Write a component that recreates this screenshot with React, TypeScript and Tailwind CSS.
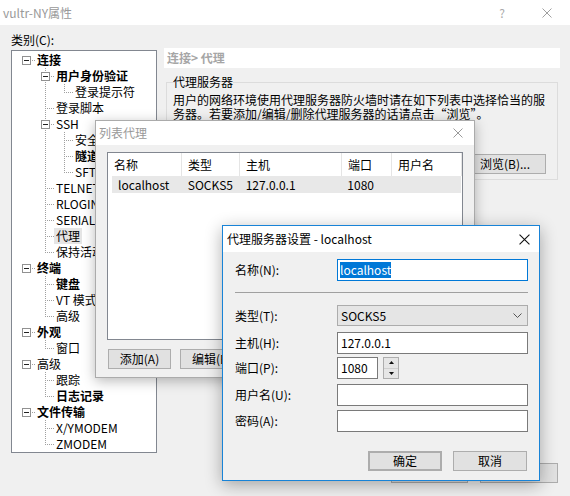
import React from 'react';

type Node = { t: string; l: number; b?: boolean; exp?: boolean; last?: boolean; sel?: boolean };

const tree: Node[] = [
  { t: '连接', l: 0, b: true, exp: true },
  { t: '用户身份验证', l: 1, b: true, exp: true },
  { t: '登录提示符', l: 2, last: true },
  { t: '登录脚本', l: 1 },
  { t: 'SSH', l: 1, exp: true },
  { t: '安全', l: 2 },
  { t: '隧道', l: 2, b: true },
  { t: 'SFTP', l: 2, last: true },
  { t: 'TELNET', l: 1 },
  { t: 'RLOGIN', l: 1 },
  { t: 'SERIAL', l: 1 },
  { t: '代理', l: 1, sel: true },
  { t: '保持活动', l: 1, last: true },
  { t: '终端', l: 0, b: true, exp: true },
  { t: '键盘', l: 1, b: true },
  { t: 'VT 模式', l: 1 },
  { t: '高级', l: 1, last: true },
  { t: '外观', l: 0, b: true, exp: true },
  { t: '窗口', l: 1, last: true },
  { t: '高级', l: 0, exp: true },
  { t: '跟踪', l: 1 },
  { t: '日志记录', l: 1, b: true, last: true },
  { t: '文件传输', l: 0, b: true, exp: true },
  { t: 'X/YMODEM', l: 1 },
  { t: 'ZMODEM', l: 1, last: true },
];

const DOT = '#a0a0a0';

function Cell({ kind, last, exp }: { kind: 'vert' | 'elbow' | 'root' | 'empty'; last?: boolean; exp?: boolean }) {
  return (
    <svg width="19" height="16" className="shrink-0" shapeRendering="crispEdges">
      {kind === 'vert' && <line x1="9.5" y1="0" x2="9.5" y2="16" stroke={DOT} strokeDasharray="1 1" />}
      {kind === 'elbow' && (
        <>
          <line x1="9.5" y1="0" x2="9.5" y2={last ? 9 : 16} stroke={DOT} strokeDasharray="1 1" />
          <line x1="11" y1="8.5" x2="19" y2="8.5" stroke={DOT} strokeDasharray="1 1" />
        </>
      )}
      {kind === 'root' && <line x1="15" y1="8.5" x2="19" y2="8.5" stroke={DOT} strokeDasharray="1 1" />}
      {exp && (
        <>
          <rect x="5.5" y="4.5" width="8" height="8" fill="white" stroke="#919191" />
          <line x1="7" y1="8.5" x2="12" y2="8.5" stroke="#222" />
        </>
      )}
    </svg>
  );
}

function TreeRow({ n }: { n: Node }) {
  const cells: React.ReactNode[] = [];
  if (n.l === 0) {
    cells.push(<Cell key="r" kind="root" exp={n.exp} />);
  } else {
    cells.push(<Cell key="e0" kind="empty" />);
    for (let a = 1; a < n.l; a++) cells.push(<Cell key={'v' + a} kind="vert" />);
    cells.push(<Cell key="el" kind="elbow" last={n.last} exp={n.exp} />);
  }
  return (
    <div className="flex h-4 items-center whitespace-nowrap pl-[5px]">
      {cells}
      <span
        className={
          'leading-4 ' +
          (n.b ? 'font-bold ' : '') +
          (n.sel ? '-ml-[1px] bg-[#e5e5e5] px-[2px]' : 'pl-[1px]')
        }
      >
        {n.t}
      </span>
    </div>
  );
}

function XIcon({ color, size = 10 }: { color: string; size?: number }) {
  return (
    <svg width={size} height={size} viewBox="0 0 10 10" className="shrink-0">
      <path d="M0.5 0.5 L9.5 9.5 M9.5 0.5 L0.5 9.5" stroke={color} strokeWidth="1" />
    </svg>
  );
}

function Btn({ label, w, cls = '' }: { label: string; w: string; cls?: string }) {
  return (
    <div
      className={
        'flex h-[20px] shrink-0 items-center justify-center border border-[#adadad] bg-[#e1e1e1] leading-4 ' +
        w +
        ' ' +
        cls
      }
    >
      {label}
    </div>
  );
}

function ListDialog() {
  const cols = [
    { h: '名称', w: 'w-[74px]', v: 'localhost' },
    { h: '类型', w: 'w-[58px]', v: 'SOCKS5' },
    { h: '主机', w: 'w-[102px]', v: '127.0.0.1' },
    { h: '端口', w: 'w-[50px]', v: '1080' },
    { h: '用户名', w: 'w-[70px]', v: '' },
  ];
  return (
    <div className="absolute left-[95px] top-[120px] flex h-[258px] w-[380px] flex-col border border-[#ababab] bg-[#f0f0f0] shadow-[0_3px_12px_rgba(0,0,0,0.28)]">
      <div className="flex h-[24px] items-center bg-white pl-[3px] pr-[11px]">
        <span className="text-[12px] text-[#999]">列表代理</span>
        <div className="ml-auto">
          <XIcon color="#9a9a9a" />
        </div>
      </div>
      <div className="flex flex-col pl-[11px] pt-[7px]">
        <div className="h-[188px] w-[356px] border border-[#828790] bg-white">
          <div className="flex h-[23px]">
            {cols.map((c) => (
              <div key={c.h} className={'flex items-center border-r border-[#e5e5e5] pl-[6px] ' + c.w}>
                {c.h}
              </div>
            ))}
          </div>
          <div className="ml-[4px] mr-[1px] flex h-[17px] bg-[#e8e8e8]">
            {cols.map((c, i) => (
              <div key={c.h} className={'flex items-center pl-[6px] ' + (i === 0 ? 'w-[70px] pl-[2px]' : c.w)}>
                {c.v}
              </div>
            ))}
          </div>
        </div>
        <div className="ml-px mt-[9px] flex gap-[9px]">
          <Btn label="添加(A)" w="w-[63px]" />
          <Btn label="编辑(E)" w="w-[63px]" />
          <Btn label="删除(D)" w="w-[63px]" />
        </div>
      </div>
    </div>
  );
}

function Field({ label, children, mt }: { label: string; children: React.ReactNode; mt: string }) {
  return (
    <div className={'flex items-center ' + mt}>
      <div className="w-[102px] shrink-0 leading-4">{label}</div>
      {children}
    </div>
  );
}

function ProxyDialog() {
  return (
    <div className="absolute left-[222px] top-[225px] flex h-[256px] w-[318px] flex-col border border-[#1883d7] bg-[#f0f0f0] shadow-[0_4px_16px_rgba(0,0,0,0.32)]">
      <div className="flex h-[26px] items-center bg-white pl-[4px] pr-[9px]">
        <span className="text-[12px]">代理服务器设置 - localhost</span>
        <div className="ml-auto">
          <XIcon color="#111" size={11} />
        </div>
      </div>
      <div className="flex flex-col pl-[12px] pr-[11px]">
        <Field label="名称(N):" mt="mt-[7px]">
          <div className="flex h-[22px] w-[191px] items-center border border-[#0078d7] bg-white pl-[2px]">
            <span className="bg-[#0078d7] leading-[16px] text-white">localhost</span>
          </div>
        </Field>
        <div className="mt-[11px] h-px w-[293px] bg-[#a0a0a0]" />
        <Field label="类型(T):" mt="mt-[12px]">
          <div className="flex h-[21px] w-[191px] items-center border border-[#acacac] bg-[#e5e5e5] pl-[3px] pr-[5px]">
            <span>SOCKS5</span>
            <svg width="9" height="5" viewBox="0 0 9 5" className="ml-auto">
              <polyline points="0.5,0.5 4.5,4.5 8.5,0.5" fill="none" stroke="#555" strokeWidth="1" />
            </svg>
          </div>
        </Field>
        <Field label="主机(H):" mt="mt-[6px]">
          <div className="flex h-[22px] w-[191px] items-center border border-[#7a7a7a] bg-white pl-[3px]">127.0.0.1</div>
        </Field>
        <Field label="端口(P):" mt="mt-[3px]">
          <div className="flex h-[22px] w-[41px] items-center border border-[#7a7a7a] bg-white pl-[3px]">1080</div>
          <div className="ml-[5px] flex h-[22px] w-[16px] flex-col border border-[#adadad] bg-[#f0f0f0]">
            <div className="flex flex-1 items-center justify-center border-b border-[#cfcfcf] bg-[#e6e6e6]">
              <svg width="5" height="3" viewBox="0 0 5 3">
                <polygon points="0,3 2.5,0 5,3" fill="#111" />
              </svg>
            </div>
            <div className="flex flex-1 items-center justify-center bg-[#e6e6e6]">
              <svg width="5" height="3" viewBox="0 0 5 3">
                <polygon points="0,0 5,0 2.5,3" fill="#111" />
              </svg>
            </div>
          </div>
        </Field>
        <Field label="用户名(U):" mt="mt-[5px]">
          <div className="h-[22px] w-[191px] border border-[#7a7a7a] bg-white" />
        </Field>
        <Field label="密码(A):" mt="mt-[4px]">
          <div className="h-[22px] w-[191px] border border-[#7a7a7a] bg-white" />
        </Field>
        <div className="mt-[19px] flex justify-end gap-[11px] pr-px">
          <Btn label="确定" w="w-[74px]" cls="border-2 border-[#0078d7]" />
          <Btn label="取消" w="w-[74px]" />
        </div>
      </div>
    </div>
  );
}

export default function App() {
  return (
    <div className="relative h-[496px] w-[570px] overflow-hidden bg-[#f0f0f0] font-['Noto_Sans_CJK_SC','Noto_Sans',sans-serif] text-[12px] text-black">
      {/* main window title bar */}
      <div className="flex h-[25px] items-center bg-white pl-[3px]">
        <span className="text-[#999]">vultr-NY属性</span>
        <div className="ml-auto flex items-center gap-[36px] pr-[18px]">
          <span className="w-[8px] text-center text-[12px] text-[#aaa]">?</span>
          <XIcon color="#a0a0a0" />
        </div>
      </div>

      {/* main body */}
      <div className="flex gap-[7px] pl-[11px] pt-[7px]">
        <div className="flex w-[146px] flex-col">
          <div className="h-4 leading-4">类别(C):</div>
          <div className="mt-[2px] h-[403px] overflow-hidden border border-[#828790] bg-white pt-px">
            {tree.map((n, i) => (
              <TreeRow key={i} n={n} />
            ))}
          </div>
        </div>
        <div className="mt-4 flex w-[396px] flex-col">
          <div className="h-5 bg-white pl-[3px] font-bold leading-5 text-[#a6a6a6]">连接&gt; 代理</div>
          <fieldset className="ml-[2px] mt-[7px] w-[392px] border border-[#dcdcdc] px-[6px] pb-[5px]">
            <legend className="leading-[14px]">代理服务器</legend>
            <div className="mt-[4px] whitespace-nowrap leading-[14px]">
              用户的网络环境使用代理服务器防火墙时请在如下列表中选择恰当的服
              <br />
              务器。若要添加/编辑/删除代理服务器的话请点击“浏览”。
            </div>
            <div className="mt-[33px] flex justify-end pr-[5px]">
              <Btn label="浏览(B)..." w="w-[75px]" cls="justify-start pl-[8px]" />
            </div>
          </fieldset>
        </div>
      </div>

      <div className="mt-[10px] flex justify-end gap-[12px] pr-[12px]">
        <Btn label="确定" w="w-[77px]" />
        <Btn label="取消" w="w-[78px]" />
      </div>

      <ListDialog />
      <ProxyDialog />
    </div>
  );
}
